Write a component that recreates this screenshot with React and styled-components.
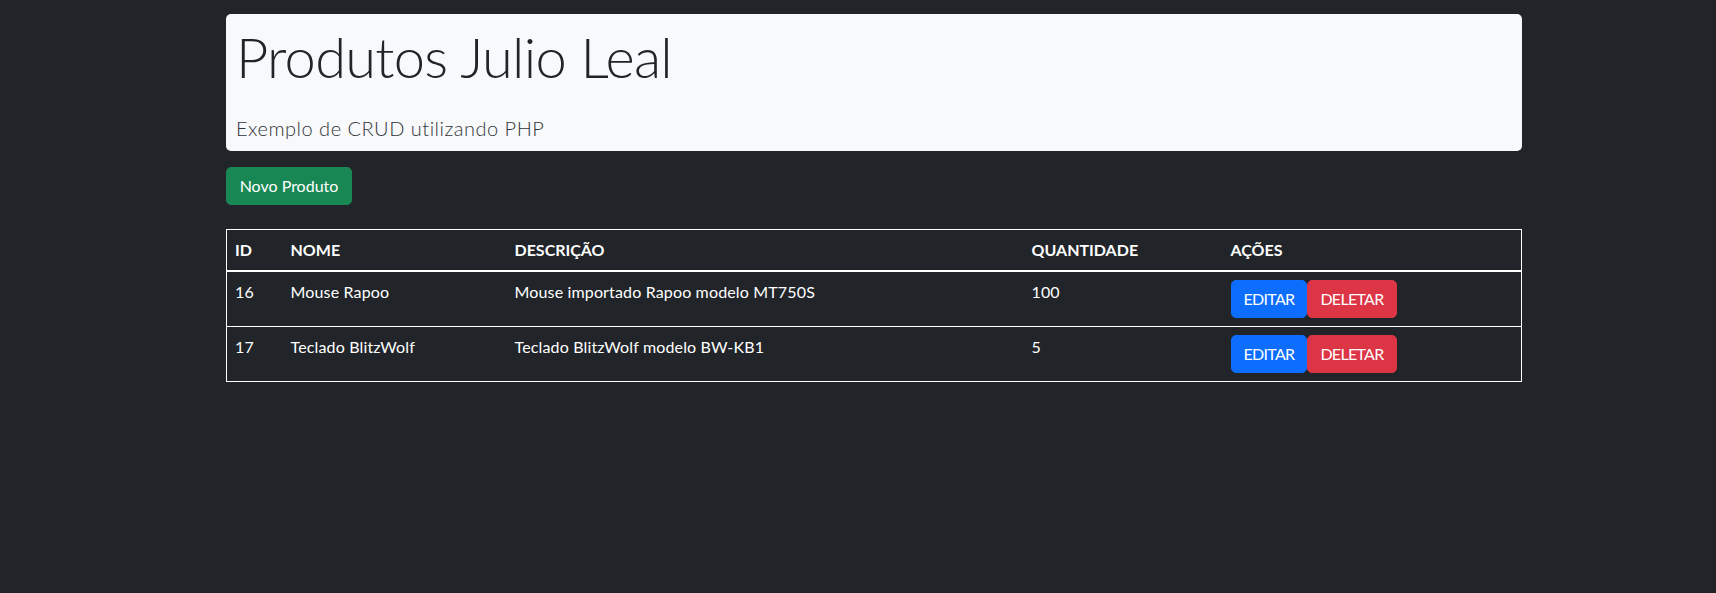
import React from 'react'
import styled, { createGlobalStyle } from 'styled-components'

const GlobalStyle = createGlobalStyle`
  * {
    box-sizing: border-box;
  }
  html,
  body {
    margin: 0;
    min-height: 100%;
    background-color: #212529;
  }
  body {
    font-family: 'Lato', 'Noto Sans', sans-serif;
    font-size: 16px;
    line-height: 1.5;
    color: #fff;
  }
`

const Container = styled.div`
  width: 1296px;
  margin: 0 auto;
  padding-top: 14px;
  position: relative;
  left: 16px;
  min-height: 593px;
`
const Jumbotron = styled.div`
  background-color: #f8f9fa;
  border-radius: 5px;
  padding: 9px 10px 8px;
  color: #212529;
`
const Title = styled.h1`
  margin: 0 0 23px;
  font-size: 56px;
  font-weight: 300;
  line-height: 1.2;
  letter-spacing: -0.7px;
`
const Lead = styled.p`
  margin: 0;
  font-size: 20px;
  font-weight: 300;
  letter-spacing: 0.5px;
  color: #30353b;
`
const Button = styled.button`
  display: inline-block;
  height: 38px;
  padding: 6px 12px;
  border: 1px solid ${(p) => p.$color};
  border-radius: 5px;
  background-color: ${(p) => p.$color};
  color: #fff;
  font-family: inherit;
  font-size: 16px;
  line-height: 24px;
  letter-spacing: -0.7px;
  cursor: pointer;
`
const NewButton = styled(Button)`
  margin-top: 16px;
  width: 126px;
  letter-spacing: 0;
`
const Table = styled.table`
  width: 1296px;
  margin-top: 24px;
  border-collapse: collapse;
  table-layout: fixed;
  border: 1px solid #fff;
  color: #fff;
`
const HeadRow = styled.tr`
  border-bottom: 2px solid #fff;
`
const Th = styled.th`
  width: ${(p) => p.$w || 'auto'};
  padding: 8px;
  text-align: left;
  font-weight: 700;
  vertical-align: middle;
`
const Row = styled.tr`
  border-bottom: 1px solid #fff;
`
const Td = styled.td`
  padding: 8px;
  vertical-align: top;
  letter-spacing: 0.15px;
`
const Actions = styled.div`
  display: flex;
`

const produtos = [
  { id: 16, nome: 'Mouse Rapoo', descricao: 'Mouse importado Rapoo modelo MT750S', quantidade: 100 },
  { id: 17, nome: 'Teclado BlitzWolf', descricao: 'Teclado BlitzWolf modelo BW-KB1', quantidade: 5 },
]

export default function App() {
  return (
    <>
      <GlobalStyle />
      <Container>
        <Jumbotron>
          <Title>Produtos Julio Leal</Title>
          <Lead>Exemplo de CRUD utilizando PHP</Lead>
        </Jumbotron>

        <NewButton $color="#198754">Novo Produto</NewButton>

        <Table>
          <thead>
            <HeadRow>
              <Th $w="56px">ID</Th>
              <Th $w="224px">NOME</Th>
              <Th $w="517px">DESCRIÇÃO</Th>
              <Th $w="199px">QUANTIDADE</Th>
              <Th>AÇÕES</Th>
            </HeadRow>
          </thead>
          <tbody>
            {produtos.map((produto) => (
              <Row key={produto.id}>
                <Td>{produto.id}</Td>
                <Td>{produto.nome}</Td>
                <Td>{produto.descricao}</Td>
                <Td>{produto.quantidade}</Td>
                <Td>
                  <Actions>
                    <Button $color="#0d6efd">EDITAR</Button>
                    <Button $color="#dc3545">DELETAR</Button>
                  </Actions>
                </Td>
              </Row>
            ))}
          </tbody>
        </Table>
      </Container>
    </>
  )
}
